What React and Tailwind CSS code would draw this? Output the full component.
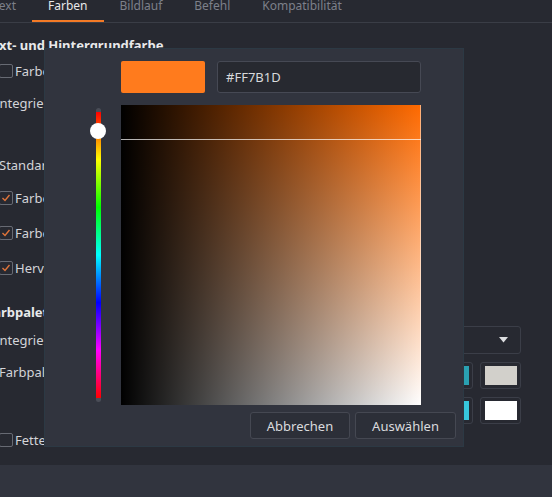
import React from 'react';

/**
 * Terminal profile "Farben" tab with a colour picker dialog on top.
 */

const TABS = [
  { label: 'Text' },
  { label: 'Farben', active: true },
  { label: 'Bildlauf' },
  { label: 'Befehl' },
  { label: 'Kompatibilität' },
];

const PALETTE_TOP = ['#1b1d22', '#c0392b', '#2ecc71', '#f1c40f', '#2d7fd1', '#9b59b6', '#2aa1b2', '#d2d0cb'];
const PALETTE_BOTTOM = ['#5a5d66', '#ef5350', '#5fe38c', '#ffe066', '#5aa9f0', '#c38fd8', '#37c7dc', '#ffffff'];

function Tab({ label, active }) {
  return (
    <div
      className={`px-4 flex flex-col ${
        active ? 'border-b-2 border-[#f47a26] text-[#e8e8ea]' : 'text-[#7d808a]'
      }`}
    >
      <span className="text-[12px] leading-[18px] whitespace-nowrap">{label}</span>
    </div>
  );
}

function CheckBox({ checked }) {
  return (
    <span className="w-[14px] h-[14px] shrink-0 border border-[#676a73] rounded-[2px] flex items-center justify-center">
      {checked && (
        <svg width="10" height="10" viewBox="0 0 10 10" fill="none">
          <polyline points="1.5,5 4,7.5 8.5,2" stroke="#e0743a" strokeWidth="1.4" />
        </svg>
      )}
    </span>
  );
}

function CheckRow({ label, checked, className }) {
  return (
    <div className={`h-[18px] flex items-center -ml-[1px] gap-[2px] ${className}`}>
      <CheckBox checked={checked} />
      <span className="leading-[18px] whitespace-nowrap">{label}</span>
    </div>
  );
}

function ColorButton({ color }) {
  return (
    <div className="w-[41px] h-[27px] rounded-[3px] border border-[#3b3e48] pl-[4px] pr-[3px] py-[3px] shrink-0">
      <div className="w-full h-full" style={{ backgroundColor: color }} />
    </div>
  );
}

function ColorDialog() {
  return (
    <div className="absolute left-[44px] top-[48px] w-[420px] h-[399px] pb-[7px] bg-[#31343e] border border-[#2c3944] flex flex-col">
      {/* Preview + hex */}
      <div className="flex gap-[12px] mt-[12px] ml-[76px]">
        <div className="w-[84px] h-[32px] rounded-[2px] bg-[#ff7b1d]" />
        <div className="w-[204px] h-[32px] rounded-[3px] border border-[#464954] bg-[#272930] flex items-center pl-[8px] text-[#d8d9dc] leading-[18px]">
          #FF7B1D
        </div>
      </div>

      {/* Hue slider + SV square */}
      <div className="flex mt-[12px] ml-[45px] gap-[15px]">
        <div className="relative w-[16px] h-[300px]">
          <div className="ml-[6px] mt-[3px] w-[5px] h-[294px] rounded-full bg-[#4a4d57] py-[4px]">
            <div className="w-full h-full bg-[linear-gradient(to_bottom,#ff0000,#ffff00,#00ff00,#00ffff,#0000ff,#ff00ff,#ff0000)]" />
          </div>
          <div className="absolute left-0 top-[18px] w-[16px] h-[16px] rounded-full bg-white" />
        </div>
        <div className="relative w-[300px] h-[300px] bg-[linear-gradient(to_right,#000000,rgba(0,0,0,0)),linear-gradient(to_bottom,#ff6a00,#ffffff)]">
          <div className="absolute left-0 right-0 top-[34px] h-px bg-white/70" />
          <div className="absolute top-0 bottom-0 right-0 w-px bg-white/45" />
        </div>
      </div>

      {/* Buttons */}
      <div className="flex justify-end gap-[5px] mt-auto mr-[7px]">
        <button className="w-[100px] h-[27px] rounded-[3px] border border-[#454852] bg-[#2c2f38] text-[#dadbde] leading-[18px]">
          Abbrechen
        </button>
        <button className="w-[101px] h-[27px] rounded-[3px] border border-[#454852] bg-[#2c2f38] text-[#dadbde] leading-[18px]">
          Auswählen
        </button>
      </div>
    </div>
  );
}

export default function App() {
  return (
    <div className="relative w-[552px] h-[497px] overflow-hidden bg-[#272931] text-[13px] text-[#d3d4d8] font-['Noto_Sans',sans-serif] flex flex-col">
      {/* Tab bar */}
      <div className="h-[26px] -mt-[3px] shrink-0 border-b border-[#3a3d46] flex -ml-[23px]">
        {TABS.map((t) => (
          <Tab key={t.label} label={t.label} active={t.active} />
        ))}
      </div>

      {/* Settings page */}
      <div className="flex-1 flex flex-col pr-[31px]">
        <div className="mt-[13px] h-[18px] -ml-[15px] font-bold text-[#e8e9eb] leading-[18px] whitespace-nowrap">
          Text- und Hintergrundfarbe
        </div>
        <CheckRow className="mt-[8px]" label="Farben des Systems verwenden" />
        <div className="mt-[14px] h-[18px] -ml-[5px] leading-[18px] whitespace-nowrap">Integriertes Farbschema:</div>
        <div className="mt-[44px] h-[18px] -ml-[1px] leading-[18px] whitespace-nowrap">Standardfarben für Vorder- und Hintergrund</div>
        <CheckRow className="mt-[15px]" checked label="Farbe für fetten Text verwenden" />
        <CheckRow className="mt-[17px]" checked label="Farbe für ausgewählten Text verwenden" />
        <CheckRow className="mt-[17px]" checked label="Hervorhebungsfarbe verwenden" />

        <div className="mt-[26px] h-[18px] -ml-[14px] font-bold text-[#e8e9eb] leading-[18px] whitespace-nowrap">
          Farbpalette
        </div>
        <div className="mt-[5px] h-[28px] flex items-center justify-between">
          <span className="-ml-[5px] leading-[18px] whitespace-nowrap">Integrierte Palette:</span>
          <div className="w-[220px] h-[28px] rounded-[3px] border border-[#3b3e48] flex items-center justify-end pr-[12px]">
            <svg width="9" height="6" viewBox="0 0 9 6">
              <polygon points="0,0 9,0 4.5,5.5" fill="#dcdde0" />
            </svg>
          </div>
        </div>
        <div className="mt-[8px] flex justify-between">
          <span className="mt-[1px] h-[18px] -ml-[1px] leading-[18px] whitespace-nowrap">Farbpalette:</span>
          <div className="flex flex-col gap-[8px]">
            <div className="flex gap-[7px]">
              {PALETTE_TOP.map((c) => (
                <ColorButton key={c} color={c} />
              ))}
            </div>
            <div className="flex gap-[7px]">
              {PALETTE_BOTTOM.map((c) => (
                <ColorButton key={c} color={c} />
              ))}
            </div>
          </div>
        </div>
        <CheckRow className="mt-[7px]" label="Fette Schrift" />
      </div>

      {/* Footer strip */}
      <div className="h-[32px] shrink-0 bg-[#31343e]" />

      <ColorDialog />
    </div>
  );
}
